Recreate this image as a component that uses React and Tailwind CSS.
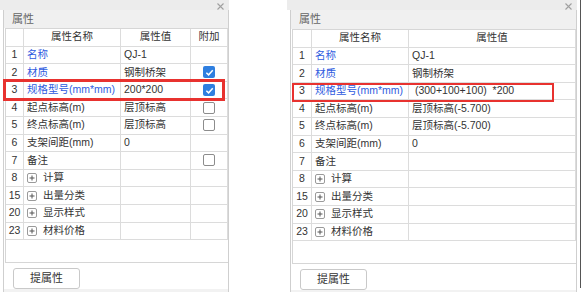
import React from "react";

const leftRows = [
  { n: 1, name: "名称", val: "QJ-1", blue: true, chk: null },
  { n: 2, name: "材质", val: "钢制桥架", blue: true, chk: true },
  { n: 3, name: "规格型号(mm*mm)", val: "200*200", blue: true, chk: true },
  { n: 4, name: "起点标高(m)", val: "层顶标高", chk: false },
  { n: 5, name: "终点标高(m)", val: "层顶标高", chk: false },
  { n: 6, name: "支架间距(mm)", val: "0", chk: null },
  { n: 7, name: "备注", val: "", chk: false },
  { n: 8, name: "计算", group: true },
  { n: 15, name: "出量分类", group: true },
  { n: 20, name: "显示样式", group: true },
  { n: 23, name: "材料价格", group: true },
];

const rightRows = [
  { n: 1, name: "名称", val: "QJ-1", blue: true },
  { n: 2, name: "材质", val: "钢制桥架", blue: true },
  { n: 3, name: "规格型号(mm*mm)", val: " (300+100+100)  *200", blue: true },
  { n: 4, name: "起点标高(m)", val: "层顶标高(-5.700)" },
  { n: 5, name: "终点标高(m)", val: "层顶标高(-5.700)" },
  { n: 6, name: "支架间距(mm)", val: "0" },
  { n: 7, name: "备注", val: "" },
  { n: 8, name: "计算", group: true },
  { n: 15, name: "出量分类", group: true },
  { n: 20, name: "显示样式", group: true },
  { n: 23, name: "材料价格", group: true },
];

const Check = ({ on }) =>
  on ? (
    <span className="w-[12px] h-[12px] rounded-[2px] bg-[#2f7fe0] flex items-center justify-center">
      <svg width="9" height="9" viewBox="0 0 10 10">
        <path d="M1.5 5.2 L4 7.6 L8.6 2.4" stroke="#fff" strokeWidth="1.6" fill="none" />
      </svg>
    </span>
  ) : (
    <span className="w-[12px] h-[12px] rounded-[2px] bg-white border border-[#8c8c8c]" />
  );

const Plus = () => (
  <span className="w-[10px] h-[10px] rounded-[2px] border border-[#9a9a9a] bg-white flex items-center justify-center mr-[6px]">
    <svg width="6" height="6" viewBox="0 0 6 6">
      <path d="M3 0.5 V5.5 M0.5 3 H5.5" stroke="#555" strokeWidth="1" />
    </svg>
  </span>
);

const Close = () => (
  <svg width="7" height="7" viewBox="0 0 7 7">
    <path d="M0.5 0.5 L6.5 6.5 M6.5 0.5 L0.5 6.5" stroke="#a0a0a0" strokeWidth="1.1" />
  </svg>
);

const Cell = ({ children, className = "" }) => (
  <div className={`h-[17.6px] border-r border-b border-[#dcdcdc] flex items-center overflow-hidden whitespace-pre ${className}`}>
    {children}
  </div>
);

const Panel = ({ rows, extra, grid, titleH, width }) => (
  <div className={`flex flex-col h-[292px] ${width}`}>
    {/* tab bar */}
    <div className="h-[10px] bg-[#ececec] flex items-center justify-end pr-[5px] pt-[2px]">
      <Close />
    </div>
    <div className="ml-[3px] flex-1 flex flex-col border-l border-r border-[#cfcfcf]">
      <div className={`${titleH} bg-[#f0f0f0] text-[11px] text-[#666] pl-[8px] flex items-center`}>
        属性
      </div>
      {/* table */}
      <div className="ml-[1px] h-[235px] border-l border-t border-b border-[#d6d6d6] bg-white">
        <div className={`grid ${grid} text-[10.5px] text-[#333]`}>
          <Cell />
          <Cell className="justify-center">属性名称</Cell>
          <Cell className="justify-center">属性值</Cell>
          {extra && <Cell className="justify-center">附加</Cell>}
          {rows.map((r) => (
            <React.Fragment key={r.n}>
              <Cell className="justify-center">{r.n}</Cell>
              <Cell className={`pl-[3px] ${r.blue ? "text-[#2e5be0]" : ""}`}>
                {r.group && <Plus />}
                {r.name}
              </Cell>
              <Cell className="pl-[3px]">{r.val}</Cell>
              {extra && (
                <Cell className="justify-center">
                  {r.chk === true && <Check on />}
                  {r.chk === false && <Check />}
                </Cell>
              )}
            </React.Fragment>
          ))}
        </div>
      </div>
      <div className="h-[26px] bg-white pl-[9px] pt-[2px]">
        <button className="w-[67px] h-[21px] rounded-[3px] border border-[#c9c9c9] bg-white text-[11px] text-[#333]">
          提属性
        </button>
      </div>
      <div className="flex-1 bg-[#f2f2f2]" />
    </div>
  </div>
);

export default function App() {
  return (
    <div className="w-[582px] h-[292px] bg-white relative flex overflow-hidden font-['Liberation_Sans','Noto_Sans_CJK_SC',sans-serif]">
      <Panel rows={leftRows} extra grid="grid-cols-[18px_97px_70px_1fr]" titleH="h-[18px]" width="w-[229px]" />
      <div className="ml-[58px]">
        <Panel rows={rightRows} grid="grid-cols-[19px_97px_1fr]" titleH="h-[19px]" width="w-[290px]" />
      </div>
      <div className="ml-[3px] w-[1px] h-[288px] bg-[#555]" />

      {/* highlight boxes */}
      <div className="absolute left-[3px] top-[79px] w-[222px] h-[22px] border-[3px] border-[#e8322f]" />
      <div className="absolute left-[292px] top-[83px] w-[262px] h-[19px] border-[2px] border-[#e8322f]" />
    </div>
  );
}
